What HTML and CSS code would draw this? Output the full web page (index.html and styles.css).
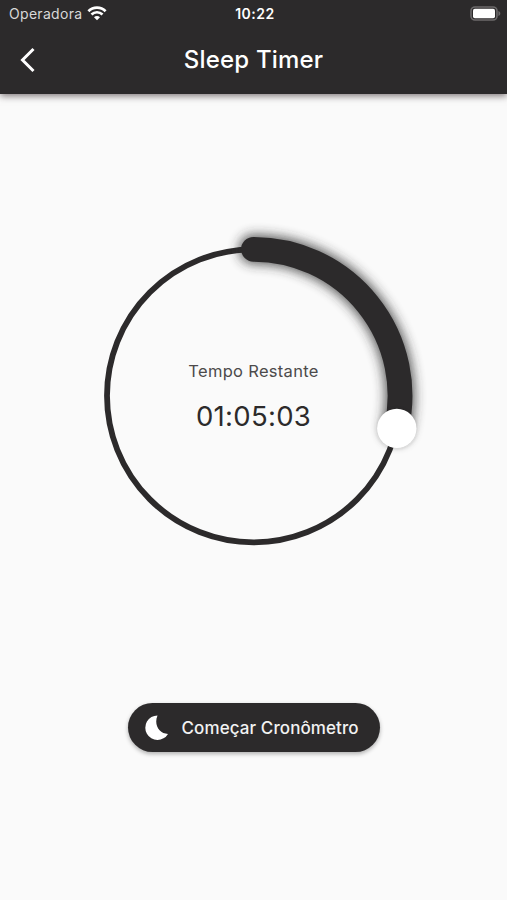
FILE: index.html
```html
<!DOCTYPE html>
<html lang="pt">
<head>
  <meta charset="UTF-8">
  <title>Sleep Timer</title>
  <link rel="stylesheet" href="styles.css">
</head>
<body>

<header>
  <div class="status">
    <div class="carrier">
      <span>Operadora</span>
      <svg width="20" height="15" viewBox="0 0 20 15" fill="none" stroke="#fff" stroke-width="2.7">
        <path d="M1.4 5.2a12.2 12.2 0 0 1 17.2 0"/>
        <path d="M4.5 8.5a7.8 7.8 0 0 1 11 0"/>
        <path d="M10 14.3l-3-3a4.2 4.2 0 0 1 6 0z" fill="#fff" stroke="none"/>
      </svg>
    </div>
    <span class="clock">10:22</span>
    <svg class="battery" width="32" height="16" viewBox="0 0 32 16">
      <rect x="2" y="1" width="26" height="13" rx="4" fill="none" stroke="#6c6a6b" stroke-width="1.6"/>
      <rect x="4" y="2.800" width="22" height="9.4" rx="1.800" fill="#fff"/>
      <path d="M29.400 5v5c1.300-.5 1.900-1.400 1.900-2.500S30.700 5.500 29.400 5z" fill="#6c6a6b"/>
    </svg>
  </div>
  <div class="toolbar">
    <a href="#" class="back" aria-label="Voltar">
      <svg width="16" height="26" viewBox="0 0 16 26" fill="none" stroke="#fff" stroke-width="3">
        <path d="M13.500 2L2.500 13l11 11"/>
      </svg>
    </a>
    <h1>Sleep Timer</h1>
  </div>
</header>

<main>
  <div class="timer">
    <svg class="dial" width="347" height="347" viewBox="0 0 347 347" fill="none">
      <defs>
        <filter id="glow" x="-20%" y="-20%" width="140%" height="140%">
          <feGaussianBlur stdDeviation="6"/>
        </filter>
        <filter id="knobShadow" x="-30%" y="-30%" width="160%" height="160%">
          <feGaussianBlur stdDeviation="2"/>
        </filter>
      </defs>
      <circle cx="173.500" cy="173.800" r="146.500" stroke="#2c2a2b" stroke-width="5.800"/>
      <path class="glow" d="M173.500 27.300A146.500 146.500 0 0 1 316.500 205.800" filter="url(#glow)"/>
      <path class="arc" d="M173.500 27.300A146.500 146.500 0 0 1 316.500 205.800"/>
      <circle cx="316.800" cy="207" r="19.500" fill="#000" opacity=".15" filter="url(#knobShadow)"/>
      <circle cx="316.800" cy="206.400" r="19.700" fill="#fff"/>
    </svg>
    <div class="reading">
      <p class="caption">Tempo Restante</p>
      <p class="time">01:05:03</p>
    </div>
  </div>

  <button class="start">
    <svg width="24" height="25" viewBox="0 0 24 25">
      <path d="M12.500.5A12.200 12.200 0 1 0 23 18.900C14.500 18.900 8.500 10 12.500.5z" fill="#fff"/>
    </svg>
    <span>Começar Cronômetro</span>
  </button>
</main>

</body>
</html>
```
FILE: styles.css
```css
* { box-sizing: border-box; }
body { font-family: Inter, "Liberation Sans", sans-serif; background: #fafafa; margin: 0; height: 900px; overflow: hidden; }
header { background: #2c2a2b; color: white; height: 94px; box-shadow: 0 2px 7px rgba(44, 30, 34, 0.6); }
.status { display: grid; grid-template-columns: 1fr auto 1fr; align-items: center; height: 27px; padding: 0 6px 0 9px; }
.carrier { display: flex; align-items: center; gap: 5px; font-size: 14px; letter-spacing: 0.3px; color: #d8d8d8; }
.clock { font-size: 14px; font-weight: 600; letter-spacing: 0.5px; }
.battery { justify-self: end; }
.toolbar { display: grid; grid-template-columns: 60px 1fr 60px; align-items: center; height: 65px; }
.back { display: flex; padding-left: 20px; }
h1 { margin: 0; font-size: 24px; font-weight: 500; letter-spacing: 0.2px; text-align: center; }

main { display: flex; flex-direction: column; align-items: center; padding-top: 128px; }
.timer { display: grid; place-items: center; width: 347px; height: 347px; }
.dial, .reading { grid-area: 1 / 1; }
.arc, .glow { stroke: #2c2a2b; stroke-width: 24.800px; stroke-linecap: round; }
.glow { stroke-width: 29px; opacity: 0.8; }
.reading { padding-top: 2px; text-align: center; color: #2c2a2b; }
.reading p { margin: 0; }
.caption { font-size: 16.500px; line-height: 24px; letter-spacing: 0.3px; color: #4c4a4b; }
.reading .time { font-size: 27.500px; line-height: 36px; letter-spacing: 0.3px; margin-top: 15px; }

.start { display: flex; align-items: center; gap: 13px; width: 252px; height: 49px; margin-top: 134px; padding: 0 0 0 17px; border: none; border-radius: 25px; background: #2c2a2b; color: #f2f2f2; font-family: inherit; font-size: 17px; font-weight: 500; letter-spacing: 0.1px; white-space: nowrap; box-shadow: 0 2px 4px rgba(0, 0, 0, 0.3); }
```
